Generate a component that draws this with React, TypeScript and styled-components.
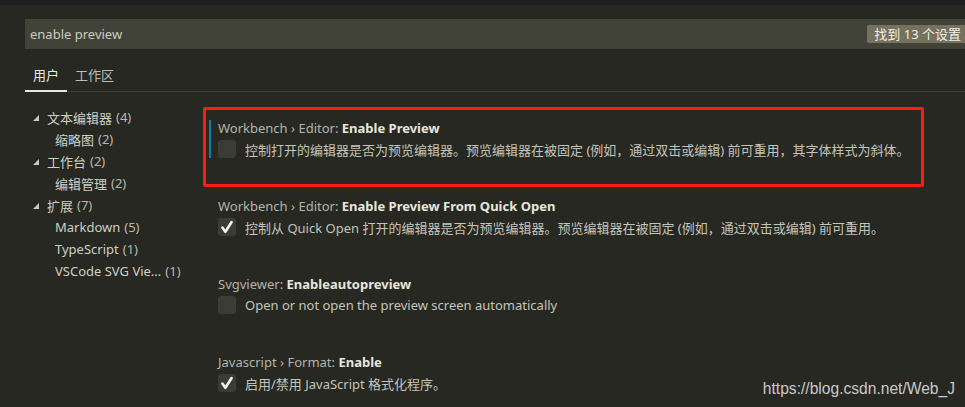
import React from 'react'
import styled, { createGlobalStyle } from 'styled-components'

const GlobalStyle = createGlobalStyle`
  html, body {
    margin: 0;
    padding: 0;
    background: #272822;
  }
  body {
    font-family: "Noto Sans", "Noto Sans CJK SC", sans-serif;
    font-size: 13px;
  }
`

const Page = styled.div`
  position: relative;
  width: 965px;
  height: 407px;
  overflow: hidden;
  background: #272822;
  color: #cfcfc2;
`
const TitleStrip = styled.div`
  height: 5px;
  background: #1e1f1c;
`
const SearchRow = styled.div`
  margin: 14px 0 0 25px;
  height: 30px;
  background: #414339;
  display: flex;
  align-items: center;
  justify-content: space-between;
  padding-left: 5px;
`
const SearchText = styled.span`
  color: #cbcbc0;
  font-size: 13px;
`
const CountBadge = styled.span`
  background: #75715e;
  color: #f0f0e8;
  font-size: 13px;
  height: 18px;
  line-height: 18px;
  padding: 0 4px 0 7px;
  border-radius: 2px 0 0 2px;
`
const Tabs = styled.div`
  margin-left: 25px;
  display: flex;
  border-bottom: 1px solid #3e3d36;
  height: 42px;
  align-items: flex-end;
`
const Tab = styled.div<{ $active?: boolean }>`
  padding: 0 8px 6px;
  font-size: 13px;
  line-height: 18px;
  color: ${(p) => (p.$active ? '#e8e8e0' : '#bcbcb2')};
  border-bottom: 2px solid ${(p) => (p.$active ? '#e8e8e0' : 'transparent')};
  margin-bottom: -1px;
`
const Body = styled.div`
  display: flex;
  padding-left: 25px;
`
const Tree = styled.ul`
  list-style: none;
  margin: 0;
  padding: 14px 0 0;
  width: 180px;
  flex-shrink: 0;
`
const TreeRow = styled.li<{ $depth: number }>`
  display: flex;
  align-items: center;
  height: 22px;
  padding-left: ${(p) => (p.$depth === 0 ? 8 : 30)}px;
  color: #cfcfc4;
  white-space: nowrap;
`
const Arrow = styled.span`
  width: 0;
  height: 0;
  border-left: 6px solid transparent;
  border-bottom: 6px solid #c8c8c0;
  margin-right: 8px;
  margin-top: 2px;
`
const Count = styled.span`
  color: #b8b8ae;
  margin-left: 4px;
`
const SettingsList = styled.div`
  flex: 1;
  padding: 27px 0 0 4px;
`
const Setting = styled.div<{ $focused?: boolean }>`
  position: relative;
  height: 78px;
  box-sizing: border-box;
  padding-left: 9px;
  &::before {
    content: '';
    position: absolute;
    left: 0;
    top: 1px;
    width: 2px;
    height: 38px;
    background: ${(p) => (p.$focused ? '#0e7fa8' : 'transparent')};
  }
`
const Highlight = styled.span`
  position: absolute;
  left: -6px;
  top: -12px;
  width: 715px;
  height: 74px;
  border: 3px solid #ff1a12;
  border-radius: 2px;
  pointer-events: none;
`
const SettingTitle = styled.div`
  height: 18px;
  line-height: 18px;
  color: #b4b4aa;
  white-space: nowrap;
  b {
    color: #e6e6de;
    font-weight: 700;
  }
`
const ValueRow = styled.div`
  display: flex;
  align-items: center;
  gap: 9px;
  margin-top: 3px;
  height: 18px;
`
const CheckBox = styled.span`
  width: 18px;
  height: 18px;
  border-radius: 3px;
  background: #3b3c35;
  display: flex;
  align-items: center;
  justify-content: center;
  flex-shrink: 0;
`
const Description = styled.span`
  color: #c4c4ba;
  white-space: nowrap;
`
const Watermark = styled.span`
  position: absolute;
  right: 10px;
  bottom: 9px;
  font-family: "Liberation Sans", Arial, sans-serif;
  font-size: 15.6px;
  color: #c9c9c9;
`

type Row = { label: string; count: number; depth: number }

const tree: Row[] = [
  { label: '文本编辑器', count: 4, depth: 0 },
  { label: '缩略图', count: 2, depth: 1 },
  { label: '工作台', count: 2, depth: 0 },
  { label: '编辑管理', count: 2, depth: 1 },
  { label: '扩展', count: 7, depth: 0 },
  { label: 'Markdown', count: 5, depth: 1 },
  { label: 'TypeScript', count: 1, depth: 1 },
  { label: 'VSCode SVG Vie...', count: 1, depth: 1 },
]

type Item = { prefix: string; name: string; checked: boolean; text: string }

const settings: Item[] = [
  {
    prefix: 'Workbench › Editor: ',
    name: 'Enable Preview',
    checked: false,
    text: '控制打开的编辑器是否为预览编辑器。预览编辑器在被固定 (例如，通过双击或编辑) 前可重用，其字体样式为斜体。',
  },
  {
    prefix: 'Workbench › Editor: ',
    name: 'Enable Preview From Quick Open',
    checked: true,
    text: '控制从 Quick Open 打开的编辑器是否为预览编辑器。预览编辑器在被固定 (例如，通过双击或编辑) 前可重用。',
  },
  {
    prefix: 'Svgviewer: ',
    name: 'Enableautopreview',
    checked: false,
    text: 'Open or not open the preview screen automatically',
  },
  {
    prefix: 'Javascript › Format: ',
    name: 'Enable',
    checked: true,
    text: '启用/禁用 JavaScript 格式化程序。',
  },
]

function Check() {
  return (
    <svg width="14" height="14" viewBox="0 0 14 14">
      <path d="M2.4 7.6 L5.4 11.8 L11.6 2" fill="none" stroke="#f2f2ec" strokeWidth="2.6" strokeLinecap="round" strokeLinejoin="round" />
    </svg>
  )
}

export default function App() {
  return (
    <Page>
      <GlobalStyle />
      <TitleStrip />
      <SearchRow>
        <SearchText>enable preview</SearchText>
        <CountBadge>找到 13 个设置</CountBadge>
      </SearchRow>
      <Tabs>
        <Tab $active>用户</Tab>
        <Tab>工作区</Tab>
      </Tabs>
      <Body>
        <Tree>
          {tree.map((r) => (
            <TreeRow key={r.label} $depth={r.depth}>
              {r.depth === 0 && <Arrow />}
              {r.label}
              <Count>({r.count})</Count>
            </TreeRow>
          ))}
        </Tree>
        <SettingsList>
          {settings.map((s, i) => (
            <Setting key={s.name} $focused={i === 0}>
              {i === 0 && <Highlight />}
              <SettingTitle>
                {s.prefix}
                <b>{s.name}</b>
              </SettingTitle>
              <ValueRow>
                <CheckBox>{s.checked && <Check />}</CheckBox>
                <Description>{s.text}</Description>
              </ValueRow>
            </Setting>
          ))}
        </SettingsList>
      </Body>
      <Watermark>https://blog.csdn.net/Web_J</Watermark>
    </Page>
  )
}
